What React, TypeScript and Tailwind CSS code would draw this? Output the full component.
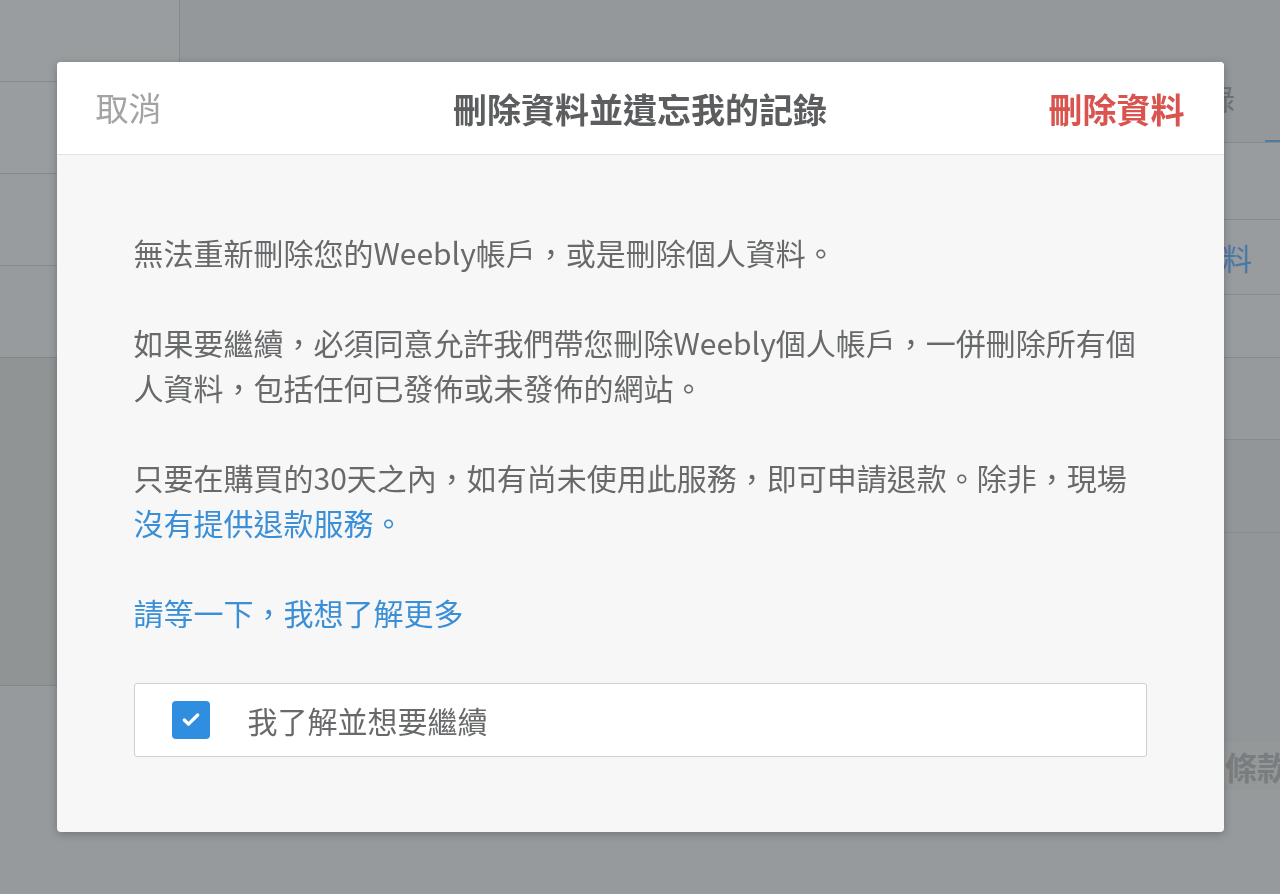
import { Check } from "lucide-react";

const font = { fontFamily: '"Noto Sans CJK TC", "Noto Sans", sans-serif' };

function BackgroundPage() {
  return (
    <div className="flex h-screen w-full overflow-hidden bg-[#979a9c]">
      {/* Left sidebar */}
      <div className="flex w-[180px] shrink-0 flex-col">
        <div className="h-[82px] border-b border-r border-[#878a8c] bg-[#9a9d9f]" />
        <div className="h-[92px] border-b border-r border-[#878a8c] bg-[#9a9d9f]" />
        <div className="h-[92px] border-b border-r border-[#878a8c] bg-[#999c9e]" />
        <div className="h-[92px] border-b border-r border-[#848789] bg-[#989b9d]" />
        <div className="h-[328px] border-b border-[#848789] bg-[#919495]" />
        <div className="flex-1" />
      </div>

      {/* Main area */}
      <div className="flex flex-1 flex-col">
        <div className="flex h-[143px] items-end justify-end border-b border-[#888b8d] bg-[#95989a]">
          <div className="mb-[22px] mr-[30px] text-[30px] text-[#6e7173]">錄</div>
          <div className="h-[2px] w-[15px] bg-[#4f7aa3]" />
        </div>
        <div className="h-[77px] border-b border-[#888b8d] bg-[#999c9e]" />
        <div className="flex h-[75px] items-center justify-end border-b border-[#888b8d] bg-[#999c9e] pr-[28px]">
          <span className="text-[30px] text-[#4a77a6]">資料</span>
        </div>
        <div className="h-[63px] border-b border-[#888b8d] bg-[#999c9e]" />
        <div className="h-[82px] border-b border-[#888b8d] bg-[#979a9c]" />
        <div className="h-[93px] border-b border-[#888b8d] bg-[#939698]" />
        <div className="h-[209px] bg-[#939698]" />
        <div className="flex justify-end overflow-hidden whitespace-nowrap bg-[#959899]">
          <span className="mr-[-9px] text-[32px] font-bold text-[#7a7d7f]">條款</span>
        </div>
      </div>
    </div>
  );
}

export default function App() {
  return (
    <div className="relative h-screen w-full overflow-hidden" style={font}>
      <BackgroundPage />

      {/* Modal */}
      <div className="fixed inset-0 flex items-center justify-center">
        <div className="w-[1167px] overflow-hidden rounded-[4px] bg-[#f7f7f7] shadow-[0_2px_8px_rgba(0,0,0,0.25)]">
          {/* Header */}
          <div className="flex h-[93px] items-center justify-between border-b border-[#e2e2e2] bg-white px-[39px]">
            <button className="w-[200px] text-left text-[33px] text-[#a3a3a3]">取消</button>
            <h1 className="text-[34px] font-bold text-[#5b5d5f]">刪除資料並遺忘我的記錄</h1>
            <button className="w-[200px] text-right text-[34px] font-bold text-[#d9534f]">刪除資料</button>
          </div>

          {/* Body */}
          <div className="px-[77px] pb-[75px] pt-[75px] text-[30px] leading-[45px] text-[#67696b]">
            <div className="flex flex-col gap-[45px]">
              <p>無法重新刪除您的Weebly帳戶，或是刪除個人資料。</p>
              <p>
                如果要繼續，必須同意允許我們帶您刪除Weebly個人帳戶，一併刪除所有個人資料，包括任何已發佈或未發佈的網站。
              </p>
              <p>
                只要在購買的30天之內，如有尚未使用此服務，即可申請退款。除非，現場
                <a href="#" className="text-[#3a8fd6]">
                  沒有提供退款服務。
                </a>
              </p>
              <p>
                <a href="#" className="text-[#3a8fd6]">
                  請等一下，我想了解更多
                </a>
              </p>
            </div>

            <label className="mt-[48px] flex h-[74px] items-center gap-[38px] rounded-[3px] border border-[#cfcfcf] bg-white pl-[37px]">
              <span className="flex h-[38px] w-[38px] items-center justify-center rounded-[4px] bg-[#2f8ee0]">
                <Check className="h-[20px] w-[20px] text-white" strokeWidth={4} />
              </span>
              <span className="text-[#67696b]">我了解並想要繼續</span>
            </label>
          </div>
        </div>
      </div>
    </div>
  );
}
